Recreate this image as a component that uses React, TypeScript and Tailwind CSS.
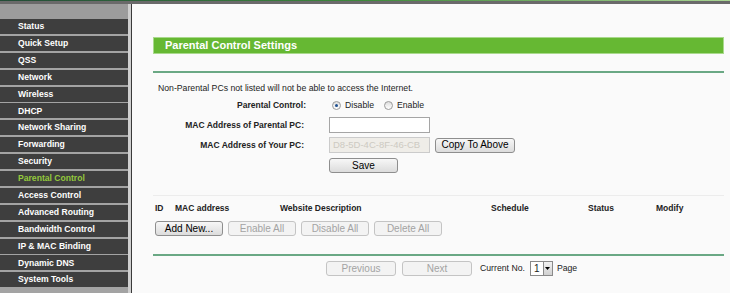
import React from "react"

const menu = [
  "Status",
  "Quick Setup",
  "QSS",
  "Network",
  "Wireless",
  "DHCP",
  "Network Sharing",
  "Forwarding",
  "Security",
  "Parental Control",
  "Access Control",
  "Advanced Routing",
  "Bandwidth Control",
  "IP & MAC Binding",
  "Dynamic DNS",
  "System Tools",
]

function Btn({ children, w, disabled }: { children: React.ReactNode; w: string; disabled?: boolean }) {
  return (
    <div
      className={`${w} h-[15px] flex items-center justify-center rounded-[3px] border text-[10px] leading-none ${
        disabled
          ? "border-[#c4c4c4] bg-[#f3f3f3] text-[#a3a3a3]"
          : "border-[#8e8e8e] bg-gradient-to-b from-[#f7f7f7] to-[#dcdcdc] text-black"
      }`}
    >
      {children}
    </div>
  )
}

function Radio({ checked }: { checked?: boolean }) {
  return (
    <div className="w-[9px] h-[9px] rounded-full border border-[#9a9a9a] bg-gradient-to-b from-[#dedede] to-[#ffffff] flex items-center justify-center">
      {checked && <div className="w-[3px] h-[3px] rounded-full bg-[#1f4f8f]" />}
    </div>
  )
}

export default function App() {
  return (
    <div className="w-[730px] h-[293px] overflow-hidden bg-[#fafafa] font-[family-name:'Liberation_Sans',Arial,sans-serif] flex flex-col">
      {/* top strip */}
      <div className="h-[1px] bg-gradient-to-r from-[#234d37] via-[#3d8a3a] to-[#a9d593]" />
      <div className="h-[3px] bg-[#6a6a6a]" />

      <div className="flex flex-1">
        {/* sidebar */}
        <div className="w-[128px] bg-[#a3a3a3] flex flex-col">
          <div className="h-[15px] bg-[#9c9c9c]" />
          {menu.map((m) => (
            <div
              key={m}
              className={`h-[15px] mb-[1.9px] bg-[#3e3e3e] pl-[18px] flex items-center text-[8.6px] font-bold ${
                m === "Parental Control" ? "text-[#94c83c]" : "text-white"
              }`}
            >
              {m}
            </div>
          ))}
        </div>
        <div className="w-[3px] bg-[#cfcfcf]" />
        <div className="w-[1px] bg-[#3a3a3a]" />

        {/* content */}
        <div className="flex-1 pl-[21px] pr-[6px] pt-[33px] text-[8.7px] text-[#222]">
          <div className="h-[17px] bg-[#66b833] border border-[#a9d98c] pl-[11px] flex items-center text-[11px] font-bold text-white">
            Parental Control Settings
          </div>
          <div className="mt-[17px] h-[2px] bg-[#6aa884]" />
          <div className="mt-[10px] pl-[5px] leading-[11px]">
            Non-Parental PCs not listed will not be able to access the Internet.
          </div>

          <div className="mt-[4px] flex flex-col">
            <div className="flex items-center h-[15px]">
              <div className="w-[153px] text-right font-bold text-[8.5px]">Parental Control:</div>
              <div className="ml-[26px] flex items-center">
                <Radio checked />
                <span className="ml-[4px]">Disable</span>
                <span className="ml-[10px]" />
                <Radio />
                <span className="ml-[4px]">Enable</span>
              </div>
            </div>
            <div className="mt-[4px] flex items-center h-[16px]">
              <div className="w-[151px] text-right font-bold text-[8.5px]">MAC Address of Parental PC:</div>
              <div className="ml-[25px] w-[101px] h-[16px] bg-white border border-[#a5a5a5]" />
            </div>
            <div className="mt-[4px] flex items-center h-[16px]">
              <div className="w-[151px] text-right font-bold text-[8.5px]">MAC Address of Your PC:</div>
              <div className="ml-[25px] w-[101px] h-[16px] bg-[#efede8] border border-[#cbcbcb] pl-[3px] flex items-center text-[9.5px] text-[#cdcac2]">
                D8-5D-4C-8F-46-CB
              </div>
              <div className="ml-[5px]">
                <Btn w="w-[80px]">Copy To Above</Btn>
              </div>
            </div>
            <div className="mt-[5px] flex items-center h-[15px]">
              <div className="ml-[176px]">
                <Btn w="w-[69px]">Save</Btn>
              </div>
            </div>
          </div>

          <div className="mt-[22px] h-[1px] bg-[#ececec]" />
          <div className="mt-[7px] flex items-center font-bold text-[8.5px] leading-[11px]">
            <span className="pl-[2px] w-[22px]">ID</span>
            <span className="w-[105px]">MAC address</span>
            <span className="w-[211px]">Website Description</span>
            <span className="w-[97px]">Schedule</span>
            <span className="w-[68px]">Status</span>
            <span>Modify</span>
          </div>
          <div className="mt-[7px] ml-[2px] flex gap-[5px]">
            <Btn w="w-[68px]">Add New...</Btn>
            <Btn w="w-[68px]" disabled>Enable All</Btn>
            <Btn w="w-[68px]" disabled>Disable All</Btn>
            <Btn w="w-[68px]" disabled>Delete All</Btn>
          </div>

          <div className="mt-[18px] h-[2px] bg-[#6aa884]" />
          <div className="mt-[5px] ml-[173px] flex items-center">
            <Btn w="w-[70px]" disabled>Previous</Btn>
            <div className="ml-[6px]">
              <Btn w="w-[70px]" disabled>Next</Btn>
            </div>
            <span className="ml-[8px]">Current No.</span>
            <div className="ml-[5px] h-[15px] w-[23px] bg-white border border-[#8a8a8a] flex items-center">
              <span className="pl-[3px] w-[12px] text-[10px]">1</span>
              <div className="h-[13px] w-[9px] bg-gradient-to-b from-[#f2f2f2] to-[#d0d0d0] border-l border-[#8a8a8a] flex items-center justify-center">
                <svg width="5" height="3" viewBox="0 0 5 3">
                  <path d="M0 0 L5 0 L2.5 3 Z" fill="#000" />
                </svg>
              </div>
            </div>
            <span className="ml-[4px]">Page</span>
          </div>
        </div>
      </div>
    </div>
  )
}
